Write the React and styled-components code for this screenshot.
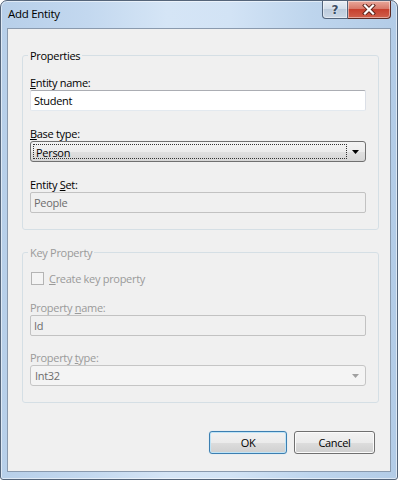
import React from "react";
import styled, { createGlobalStyle } from "styled-components";

const GlobalStyle = createGlobalStyle`
  html, body { margin: 0; padding: 0; background: #ffffff; }
  body { font-family: "Open Sans", "Noto Sans", sans-serif; font-size: 11px; letter-spacing: -0.3px; color: #000; }
  * { box-sizing: border-box; }
`;

const Window = styled.div`
  width: 398px;
  height: 480px;
  border: 1px solid #55657a;
  border-radius: 7px 7px 3px 3px;
  background: linear-gradient(90deg, #b7cfe9 0%, #c3d8ef 22%, #d5e5f6 42%, #d2e3f5 58%, #bed5ed 78%, #b3cce7 100%);
  box-shadow: inset 0 0 0 1px rgba(255, 255, 255, 0.55);
  display: flex;
  flex-direction: column;
  overflow: hidden;
`;

const TitleBar = styled.div`
  height: 27px;
  display: flex;
  align-items: flex-start;
`;

const Title = styled.div`
  padding: 5px 0 0 7px;
  line-height: 16px;
  font-size: 11.5px;
  color: #000;
`;

const Controls = styled.div`
  margin-left: auto;
  margin-right: 6px;
  display: flex;
`;

const CaptionButton = styled.div`
  height: 18px;
  width: ${(p) => p.$w}px;
  display: flex;
  align-items: center;
  justify-content: center;
  border: 1px solid ${(p) => (p.$close ? "#5e2a23" : "#53657c")};
  border-top: none;
  ${(p) => (p.$close ? "border-left: none;" : "")}
  border-radius: ${(p) => (p.$close ? "0 0 4px 0" : "0 0 0 4px")};
  background: ${(p) =>
    p.$close
      ? "linear-gradient(#e9a89b 0%, #d8796a 45%, #c7402e 50%, #d0604c 100%)"
      : "linear-gradient(#e8eef5 0%, #d3deea 45%, #bccbdc 50%, #cbd8e6 100%)"};
  box-shadow: inset 0 0 0 1px rgba(255, 255, 255, 0.45);
`;

const HelpGlyph = styled.span`
  font-family: "DejaVu Sans", sans-serif;
  font-weight: bold;
  font-size: 12px;
  line-height: 12px;
  letter-spacing: 0;
  color: #3c4d63;
  text-shadow: 0 0 2px #ffffff;
`;

const Client = styled.div`
  flex: 1;
  margin: 0 6px 7px 6px;
  border: 1px solid #8a9aae;
  background: #f0f0f0;
  display: flex;
  flex-direction: column;
  padding: 0 11px 0 14px;
`;

const Group = styled.fieldset`
  margin: ${(p) => p.$top}px 0 0 0;
  padding: ${(p) => p.$pt}px 12px 16px 7px;
  border: 1px solid #d5dfe5;
  border-radius: 3px;
  min-width: 0;
`;

const Legend = styled.legend`
  padding: 0 2px;
  margin-left: -2px;
  line-height: 15px;
  color: ${(p) => (p.$disabled ? "#9a9a9a" : "#000")};
`;

const Label = styled.div`
  display: block;
  height: 15px;
  line-height: 15px;
  margin-top: ${(p) => p.$top || 0}px;
  color: ${(p) => (p.$disabled ? "#9a9a9a" : "#000")};
`;

const TextBox = styled.div`
  height: 21px;
  border: 1px solid;
  border-color: ${(p) => (p.$disabled ? "#c2c2c2" : "#abadb3 #dbdfe6 #e3e9ef #e2e3ea")};
  border-radius: 2px;
  background: ${(p) => (p.$disabled ? "#f0f0f0" : "#ffffff")};
  padding: 0 3px;
  line-height: 19px;
  color: ${(p) => (p.$disabled ? "#6d6d6d" : "#000")};
`;

const Combo = styled.div`
  height: 21px;
  display: flex;
  align-items: stretch;
  border: 1px solid ${(p) => (p.$disabled ? "#c5c5c5" : "#707070")};
  border-radius: 3px;
  background: ${(p) =>
    p.$disabled
      ? "#f4f4f4"
      : "linear-gradient(#f3f3f3 0%, #ececec 50%, #e0e0e0 51%, #d6d6d6 100%)"};
  padding: 1px;
  color: ${(p) => (p.$disabled ? "#6d6d6d" : "#000")};
`;

const ComboText = styled.div`
  flex: 1;
  padding: 0 2px 0 ${(p) => (p.$focused ? 2 : 3)}px;
  line-height: ${(p) => (p.$focused ? 15 : 17)}px;
  margin: ${(p) => (p.$focused ? "1px 0 1px 1px" : "0")};
  border: ${(p) => (p.$focused ? "1px dotted #333" : "none")};
`;

const ComboArrow = styled.div`
  width: 17px;
  display: flex;
  align-items: center;
  justify-content: center;
`;

const CheckRow = styled.div`
  display: flex;
  align-items: center;
  height: 15px;
  gap: 5px;
`;

const CheckBox = styled.div`
  width: 13px;
  height: 13px;
  margin-left: 1px;
  border: 1px solid #b4b4b4;
  background: #f4f4f4;
`;

const ButtonRow = styled.div`
  margin-top: auto;
  display: flex;
  justify-content: flex-end;
  gap: 7px;
  padding: 0 4px 17px 0;
`;

const PushButton = styled.div`
  width: ${(p) => p.$w}px;
  height: 23px;
  border: 1px solid ${(p) => (p.$default ? "#3c7fb1" : "#707070")};
  border-radius: 3px;
  background: linear-gradient(#f2f2f2 0%, #ebebeb 50%, #dddddd 51%, #cfcfcf 100%);
  box-shadow: ${(p) =>
    p.$default
      ? "inset 0 0 0 1px #bfe4f7, 0 0 1px #9fd0f0"
      : "inset 0 0 0 1px #fbfbfb"};
  display: flex;
  align-items: center;
  justify-content: center;
  line-height: 15px;
  color: #000;
`;

const Arrow = ({ color }) => (
  <svg width="7" height="4" viewBox="0 0 7 4">
    <polygon points="0,0 7,0 3.5,4" fill={color} />
  </svg>
);

const CloseGlyph = () => (
  <svg width="14" height="11" viewBox="0 0 14 11">
    <path d="M3 1.5 L11 9.5 M11 1.5 L3 9.5" stroke="#5a2118" strokeWidth="4" strokeLinecap="square" fill="none" />
    <path d="M3 1.5 L11 9.5 M11 1.5 L3 9.5" stroke="#ffffff" strokeWidth="2.2" strokeLinecap="square" fill="none" />
  </svg>
);

export default function App() {
  return (
    <>
      <GlobalStyle />
      <Window>
        <TitleBar>
          <Title>Add Entity</Title>
          <Controls>
            <CaptionButton $w={26}>
              <HelpGlyph>?</HelpGlyph>
            </CaptionButton>
            <CaptionButton $w={43} $close>
              <CloseGlyph />
            </CaptionButton>
          </Controls>
        </TitleBar>
        <Client>
          <Group $top={19} $pt={12}>
            <Legend>Properties</Legend>
            <Label>
              <u>E</u>ntity name:
            </Label>
            <TextBox>Student</TextBox>
            <Label $top={15}>
              <u>B</u>ase type:
            </Label>
            <Combo>
              <ComboText $focused>Person</ComboText>
              <ComboArrow>
                <Arrow color="#000" />
              </ComboArrow>
            </Combo>
            <Label $top={15}>
              Entity <u>S</u>et:
            </Label>
            <TextBox $disabled>People</TextBox>
          </Group>
          <Group $top={15} $pt={11}>
            <Legend $disabled>Key Property</Legend>
            <CheckRow>
              <CheckBox />
              <Label $disabled>
                <u>C</u>reate key property
              </Label>
            </CheckRow>
            <Label $top={14} $disabled>
              Property <u>n</u>ame:
            </Label>
            <TextBox $disabled>Id</TextBox>
            <Label $top={14} $disabled>
              Property <u>t</u>ype:
            </Label>
            <Combo $disabled>
              <ComboText>Int32</ComboText>
              <ComboArrow>
                <Arrow color="#a0a0a0" />
              </ComboArrow>
            </Combo>
          </Group>
          <ButtonRow>
            <PushButton $w={78} $default>OK</PushButton>
            <PushButton $w={81}>Cancel</PushButton>
          </ButtonRow>
        </Client>
      </Window>
    </>
  );
}
